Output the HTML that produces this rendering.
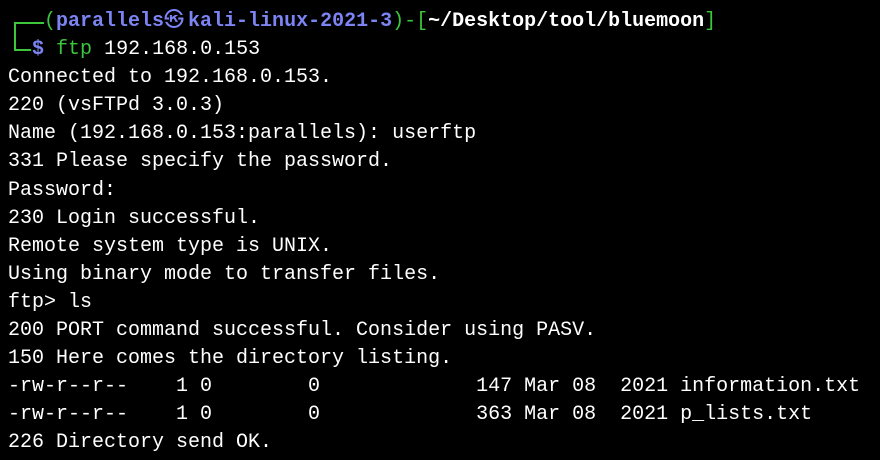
<!DOCTYPE html>
<html><head><meta charset="utf-8"><style>
html,body{margin:0;padding:0;background:#000;}
body{width:880px;height:460px;overflow:hidden;position:relative;}
pre{margin:0;position:absolute;left:8px;top:8px;font-family:"Liberation Mono","DejaVu Sans Mono",monospace;font-size:20px;line-height:28.1px;color:#fff;}
.g{color:#3cc63c}.b{color:#7b84f2;font-weight:bold}.w{color:#fff;font-weight:bold}
.sym{display:inline-block;width:24px;text-align:left;font-weight:normal}
.br{position:absolute;border-color:#3cc63c;border-style:solid;}
</style></head><body>
<div class="br" style="left:14px;top:22px;width:28px;height:27px;border-width:2px 0 0 2px"></div>
<div class="br" style="left:14px;top:49px;width:17px;height:0;border-width:2px 0 0 0"></div>
<pre><span class="g">   (</span><span class="b">parallels<span class="sym">㉿</span>kali-linux-2021-3</span><span class="g">)-[</span><span class="w">~/Desktop/tool/bluemoon</span><span class="g">]</span>
  <span class="b">$</span> <span class="g">ftp</span> 192.168.0.153
Connected to 192.168.0.153.
220 (vsFTPd 3.0.3)
Name (192.168.0.153:parallels): userftp
331 Please specify the password.
Password:
230 Login successful.
Remote system type is UNIX.
Using binary mode to transfer files.
ftp&gt; ls
200 PORT command successful. Consider using PASV.
150 Here comes the directory listing.
-rw-r--r--    1 0        0             147 Mar 08  2021 information.txt
-rw-r--r--    1 0        0             363 Mar 08  2021 p_lists.txt
226 Directory send OK.</pre></body></html>
